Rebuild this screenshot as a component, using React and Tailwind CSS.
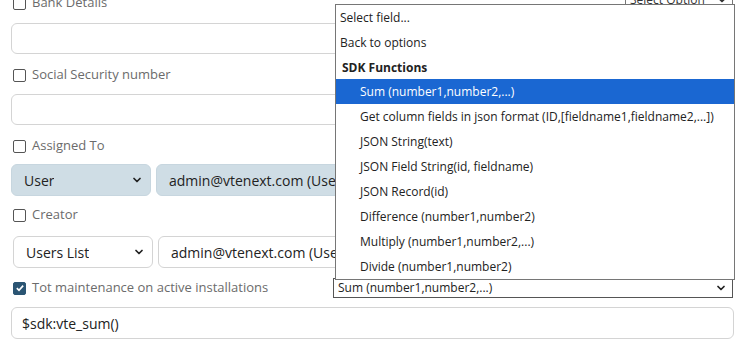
import { ChevronDown } from "lucide-react";

const font = { fontFamily: '"Open Sans", "Noto Sans", sans-serif' };

function Check({ checked = false }) {
  return (
    <span
      className={`inline-flex h-[13px] w-[13px] shrink-0 items-center justify-center rounded-[2px] border ${
        checked ? "border-[#2b5573] bg-[#2b5573]" : "border-[#555] bg-white"
      }`}
    >
      {checked && (
        <svg viewBox="0 0 12 12" className="h-[10px] w-[10px]">
          <path d="M2.2 6.2 L4.8 8.8 L9.8 3.2" fill="none" stroke="white" strokeWidth="2" />
        </svg>
      )}
    </span>
  );
}

function Label({ children, checked, className = "" }) {
  return (
    <div className={`flex h-5 items-center gap-[6px] pl-[2px] text-[13px] text-[#6b6b6b] ${className}`}>
      <Check checked={checked} />
      <span>{children}</span>
    </div>
  );
}

function Select({ children, blue, className = "" }) {
  return (
    <div
      className={`flex h-[32px] items-center justify-between rounded-[6px] border pl-[12px] pr-[7px] text-[14px] text-[#222] ${
        blue ? "border-[#c7d6df] bg-[#cfdde5]" : "border-[#d4d4d4] bg-white"
      } ${className}`}
    >
      <span className="truncate">{children}</span>
      <ChevronDown size={12} strokeWidth={3.5} className="shrink-0 text-[#222]" />
    </div>
  );
}

const options = [
  "Sum (number1,number2,...)",
  "Get column fields in json format (ID,[fieldname1,fieldname2,...])",
  "JSON String(text)",
  "JSON Field String(id, fieldname)",
  "JSON Record(id)",
  "Difference (number1,number2)",
  "Multiply (number1,number2,...)",
  "Divide (number1,number2)",
];

export default function App() {
  return (
    <div className="relative h-[351px] w-[736px] overflow-hidden bg-white" style={font}>
      <div className="-mt-[7px] pl-[11px] pr-[2px]">
        <div className="flex items-center justify-between">
          <Label>Bank Details</Label>
          <div className="mr-[1px] -mt-[6px] flex h-[19px] w-[108px] items-center justify-between border border-[#777] px-[4px] text-[12px] text-[#333]">
            <span>Select Option</span>
            <ChevronDown size={12} strokeWidth={3.5} />
          </div>
        </div>
        <div className="mt-[10px] h-[31px] rounded-[6px] border border-[#d4d4d4]" />

        <Label className="mt-[11px]">Social Security number</Label>
        <div className="mt-[9px] h-[31px] rounded-[6px] border border-[#d4d4d4]" />

        <Label className="mt-[11px]">Assigned To</Label>
        <div className="mt-[8px] flex gap-[5px]">
          <Select blue className="w-[140px]">User</Select>
          <Select blue className="w-[300px]">admin@vtenext.com (User)</Select>
        </div>

        <Label className="mt-[9px]">Creator</Label>
        <div className="mt-[11px] flex gap-[5px] pl-[2px]">
          <Select className="w-[140px]">Users List</Select>
          <Select className="w-[300px]">admin@vtenext.com (User)</Select>
        </div>

        <div className="mt-[10px] flex items-center justify-between">
          <Label checked>Tot maintenance on active installations</Label>
          <div className="mr-[1px] flex h-[20px] w-[400px] items-center justify-between border border-[#555] bg-white pl-[4px] pr-[5px] text-[12px] text-[#222]">
            <span>Sum (number1,number2,...)</span>
            <ChevronDown size={12} strokeWidth={3.5} />
          </div>
        </div>
        <div className="mt-[9px] flex h-[32px] items-center rounded-[6px] border border-[#d4d4d4] px-[10px] text-[14px] text-[#222]">
          $sdk:vte_sum()
        </div>
      </div>

      <div className="absolute left-[335px] top-[4px] w-[400px] border border-[#767676] bg-white text-[12px] text-[#222]">
        <div className="flex h-[25px] items-center pl-[4px]">Select field...</div>
        <div className="flex h-[25px] items-center pl-[4px]">Back to options</div>
        <div className="flex h-[24px] items-center pl-[6px] pt-[2px] font-bold">SDK Functions</div>
        {options.map((o, i) => (
          <div
            key={o}
            className={`flex h-[25px] items-center pl-[24px] ${i === 0 ? "bg-[#1a67d2] text-white" : ""}`}
          >
            {o}
          </div>
        ))}
      </div>
    </div>
  );
}
